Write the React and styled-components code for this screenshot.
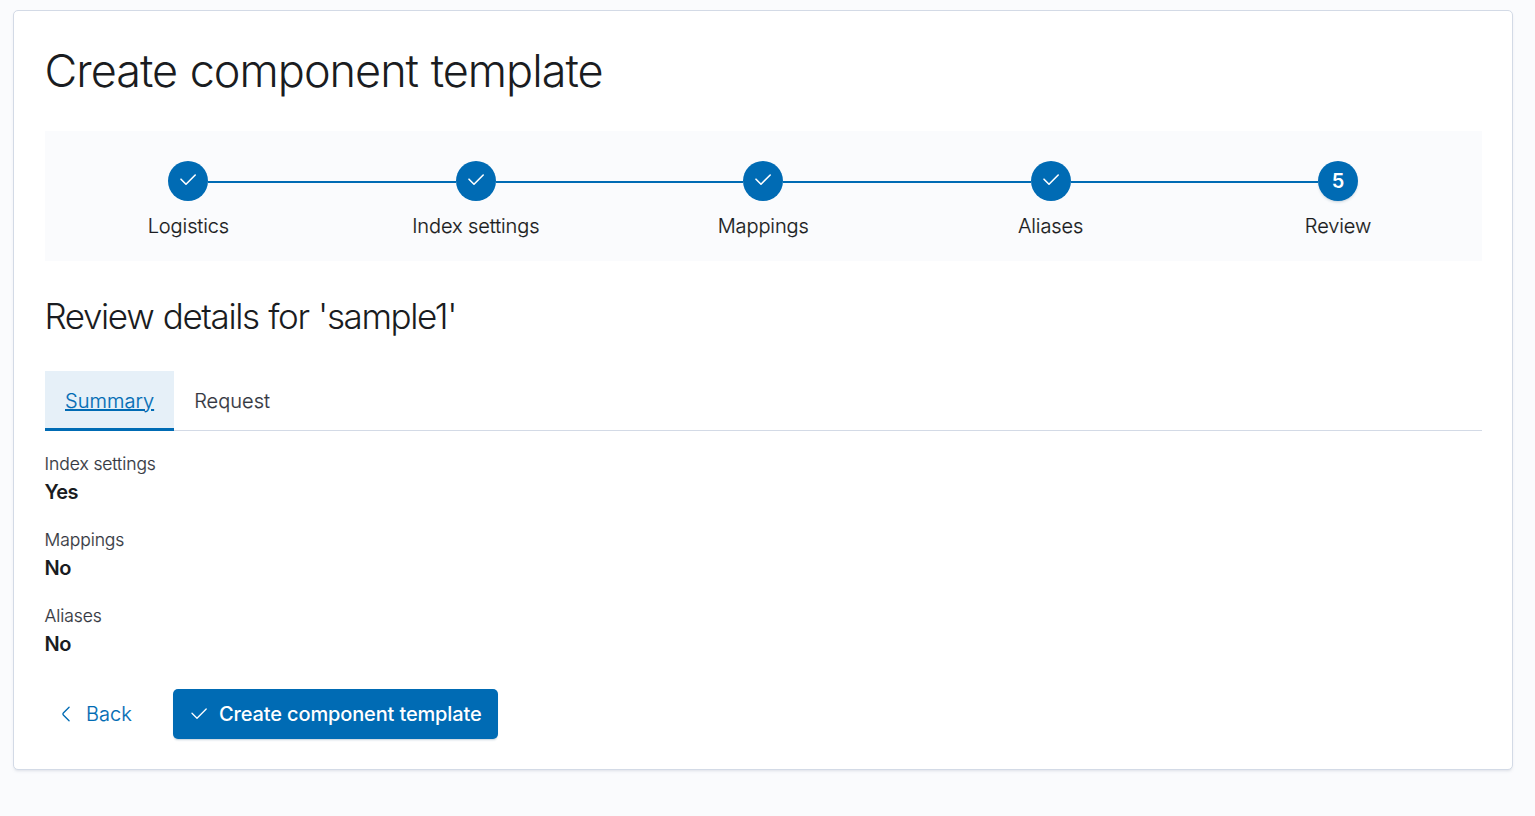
import React from "react";
import styled, { createGlobalStyle, css } from "styled-components";

const GlobalStyle = createGlobalStyle`
  *, *::before, *::after { box-sizing: border-box; }
  body {
    margin: 0;
    background: #fafbfd;
    color: #1a1c21;
    font-family: Inter, "Liberation Sans", sans-serif;
    font-size: 20px;
    letter-spacing: -0.1px;
  }
  h1, h2, p, dl, dd, ol { margin: 0; padding: 0; }
  button { font: inherit; border: 0; cursor: pointer; }
`;

/* Body copy sits between the light and regular cuts of Inter. */
const bodyWeight = css`
  font-weight: 300;
  -webkit-text-stroke: 0.18px currentColor;
`;

const Page = styled.main`
  min-height: 816px;
  padding: 10px 22px 46px 13px;
`;

const Panel = styled.section`
  height: 760px;
  padding: 30px 30px 30px 31px;
  background: #fff;
  border: 1px solid #d3dae6;
  border-radius: 5px;
  box-shadow: 0 2px 3px -1px rgba(152, 162, 179, 0.3);
`;

const Title = styled.h1`
  height: 60px;
  margin-left: -0.5px;
  font-size: 45px;
  font-weight: 300;
  line-height: 60px;
  letter-spacing: -1px;
  word-spacing: 1px;
`;

const Steps = styled.ol`
  display: grid;
  grid-template-columns: repeat(5, 1fr);
  height: 130px;
  margin-top: 30px;
  padding-top: 30px;
  background: #fafbfd;
  list-style: none;
`;

const Step = styled.li`
  display: flex;
  flex-direction: column;
  align-items: center;
  margin: 0 0.3px 0 -0.3px;
`;

const Track = styled.div`
  display: flex;
  align-items: center;
  width: 100%;
`;

const Line = styled.span`
  flex: 1;
  height: 2px;
  margin-top: 2px;
  background: ${(p) => (p.$hidden ? "transparent" : "#006bb4")};
`;

const Circle = styled.span`
  display: flex;
  align-items: center;
  justify-content: center;
  width: 40px;
  height: 40px;
  border-radius: 50%;
  background: #006bb4;
  color: #fff;
  font-weight: 600;
  box-shadow: ${(p) => (p.$current ? "0 2px 3px -1px rgba(54, 97, 126, 0.3)" : "none")};

  svg { margin-top: -1.4px; }
`;

const StepLabel = styled.span`
  ${bodyWeight}
  margin-top: 10px;
  line-height: 30px;
`;

const Subtitle = styled.h2`
  height: 40px;
  margin: 35px 0 0 -0.6px;
  font-size: 35px;
  font-weight: 300;
  line-height: 40px;
  letter-spacing: -1.38px;
  word-spacing: 1px;
`;

const Tabs = styled.div`
  display: flex;
  height: 60px;
  margin-top: 35px;
  box-shadow: inset 0 -1px 0 #d3dae6;
`;

const Tab = styled.button`
  ${bodyWeight}
  height: 60px;
  padding: 0 20px;
  line-height: 60px;
  letter-spacing: 0.03px;
  color: ${(p) => (p.$active ? "#006bb4" : "#343741")};
  background: ${(p) => (p.$active ? "#e6f0f8" : "transparent")};
  box-shadow: ${(p) => (p.$active ? "inset 0 -3px 0 #006bb4" : "none")};
  text-decoration: ${(p) => (p.$active ? "underline" : "none")};
`;

const Details = styled.dl`
  display: flex;
  flex-direction: column;
  gap: 18px;
  margin: 19px 0 0 -0.4px;
`;

const Detail = styled.div`
  height: 58px;
`;

const Term = styled.dt`
  ${bodyWeight}
  font-size: 17.5px;
  line-height: 28px;
  letter-spacing: -0.1px;
  color: #343741;
`;

const Value = styled.dd`
  font-weight: 600;
  line-height: 28px;
  letter-spacing: -0.6px;
`;

const Actions = styled.div`
  display: flex;
  gap: 26px;
  margin-top: 29px;
`;

const Button = styled.button`
  display: flex;
  align-items: center;
  gap: 10px;
  height: 50px;
  border-radius: 5px;
  white-space: nowrap;

  svg { flex-shrink: 0; }
`;

const BackButton = styled(Button)`
  ${bodyWeight}
  width: 102px;
  padding: 0 11px;
  background: transparent;
  color: #006bb4;
  letter-spacing: 0;
`;

const CreateButton = styled(Button)`
  width: 325px;
  padding: 0 16px;
  background: #006bb4;
  color: #fff;
  font-weight: 500;
  letter-spacing: -0.14px;
  box-shadow: 0 2px 2px -1px rgba(54, 97, 126, 0.3);
`;

const CheckIcon = ({ weight = 1.3 }) => (
  <svg
    width="20"
    height="20"
    viewBox="0 0 20 20"
    fill="none"
    stroke="currentColor"
    strokeWidth={weight}
    strokeLinecap="round"
    strokeLinejoin="round"
    aria-hidden="true"
  >
    <path d="M3 9.2L8 14.2L17.2 5" />
  </svg>
);

const ArrowLeftIcon = () => (
  <svg width="20" height="20" viewBox="0 0 16 16" fill="currentColor" aria-hidden="true">
    <path d="M10.843 13.069L6.232 8.384a.546.546 0 010-.768l4.61-4.685a.552.552 0 000-.771.53.53 0 00-.759 0l-4.61 4.684a1.65 1.65 0 000 2.312l4.61 4.684a.53.53 0 00.76 0 .552.552 0 000-.771z" />
  </svg>
);

const steps = ["Logistics", "Index settings", "Mappings", "Aliases", "Review"];
const details = [
  ["Index settings", "Yes"],
  ["Mappings", "No"],
  ["Aliases", "No"],
];

export default function App() {
  const last = steps.length - 1;
  return (
    <Page>
      <GlobalStyle />
      <Panel>
        <Title>Create component template</Title>
        <Steps>
          {steps.map((label, i) => (
            <Step key={label}>
              <Track>
                <Line $hidden={i === 0} />
                <Circle $current={i === last}>{i === last ? i + 1 : <CheckIcon weight={1.6} />}</Circle>
                <Line $hidden={i === last} />
              </Track>
              <StepLabel>{label}</StepLabel>
            </Step>
          ))}
        </Steps>
        <Subtitle>Review details for 'sample1'</Subtitle>
        <Tabs role="tablist">
          <Tab role="tab" $active>Summary</Tab>
          <Tab role="tab">Request</Tab>
        </Tabs>
        <Details>
          {details.map(([term, value]) => (
            <Detail key={term}>
              <Term>{term}</Term>
              <Value>{value}</Value>
            </Detail>
          ))}
        </Details>
        <Actions>
          <BackButton><ArrowLeftIcon />Back</BackButton>
          <CreateButton><CheckIcon />Create component template</CreateButton>
        </Actions>
      </Panel>
    </Page>
  );
}
